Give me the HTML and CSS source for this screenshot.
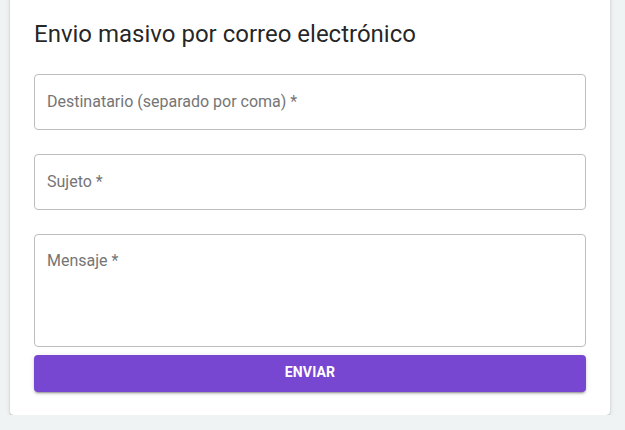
FILE: index.html
```html
<!DOCTYPE html>
<html lang="es">
<head>
<meta charset="utf-8">
<link rel="stylesheet" href="styles.css">
</head>
<body>
  <div class="card">
    <h2 class="title">Envio masivo por correo electrónico</h2>
    <form class="form">
      <div class="field"><span class="label">Destinatario (separado por coma) *</span></div>
      <div class="field"><span class="label">Sujeto *</span></div>
      <div class="field field-area"><span class="label">Mensaje *</span></div>
      <button type="button" class="btn">Enviar</button>
    </form>
  </div>
</body>
</html>
```

FILE: styles.css
```css
html, body {
  margin: 0;
  padding: 0;
}
body {
  background: #f0f3f4;
  font-family: Roboto, "Liberation Sans", sans-serif;
  padding: 0 15px 0 10px;
}
.card {
  margin-top: -10px;
  background: #fff;
  border-radius: 4px;
  box-shadow: 0 3px 1px -2px rgba(0,0,0,.2), 0 2px 2px 0 rgba(0,0,0,.14), 0 1px 5px 0 rgba(0,0,0,.12);
  padding: 28px 24px 23px;
}
.title {
  margin: 0;
  font-size: 24px;
  font-weight: 400;
  line-height: 32px;
  color: rgba(0,0,0,.87);
}
.form {
  margin-top: 24px;
  display: flex;
  flex-direction: column;
}
.field {
  box-sizing: border-box;
  height: 56px;
  border: 1px solid #bdbdbd;
  border-radius: 4px;
  padding: 0 12px;
  display: flex;
  align-items: center;
  margin-bottom: 24px;
}
.field-area {
  height: 113px;
  align-items: flex-start;
  padding-top: 16px;
  margin-bottom: 8px;
}
.label {
  font-size: 16px;
  line-height: 20px;
  color: #757575;
}
.btn {
  height: 37px;
  padding: 0 16px 3px;
  border: none;
  border-radius: 4px;
  background: #7847d1;
  color: #fff;
  font-family: inherit;
  font-size: 14px;
  font-weight: 700;
  letter-spacing: 0.01em;
  text-transform: uppercase;
  box-shadow: 0 3px 1px -2px rgba(0,0,0,.2), 0 2px 2px 0 rgba(0,0,0,.14), 0 1px 5px 0 rgba(0,0,0,.12);
  cursor: pointer;
}
```
